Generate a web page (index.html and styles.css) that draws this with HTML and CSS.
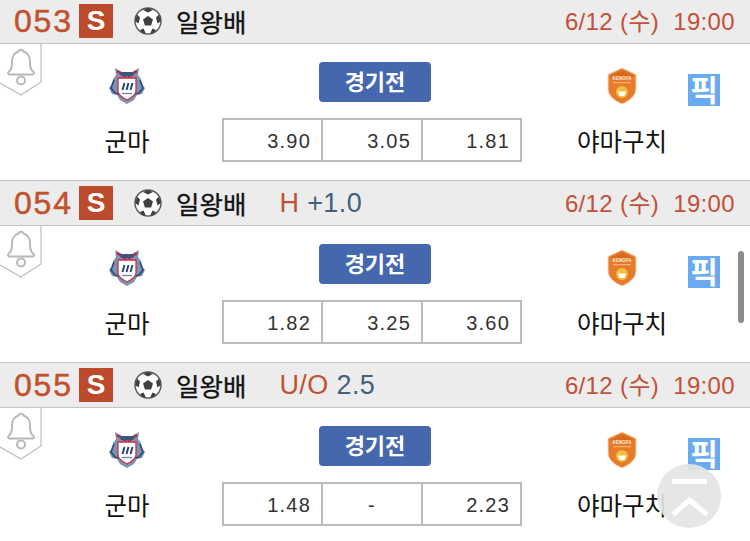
FILE: index.html
```html
<!DOCTYPE html>
<html lang="ko">
<head>
  <meta charset="UTF-8" />
  <meta name="viewport" content="width=device-width, initial-scale=1.0" />
  <title>일왕배</title>
  <link rel="stylesheet" href="styles.css">
</head>
<body>
  <svg class="defs" width="0" height="0">
    <defs>
      <symbol id="ball" viewBox="0 0 28 28">
        <circle cx="14" cy="14" r="13" fill="#fff" stroke="#555" stroke-width="1.4"/>
        <polygon points="14,9 19,12.6 17.1,18.4 10.9,18.4 9,12.6" fill="#404040"/>
        <polygon points="14,1 19,3 14,5.4 9,3" fill="#404040"/>
        <polygon points="25,7.5 27,14 23.5,16.5 22,10.5" fill="#404040"/>
        <polygon points="1,14 3,7.5 6,10.5 4.5,16.5" fill="#404040"/>
        <polygon points="6,23 9.5,21.5 12,26.7 8,25.7" fill="#404040"/>
        <polygon points="22,23 18.5,21.5 16,26.7 20,25.7" fill="#404040"/>
      </symbol>
      <symbol id="bell" viewBox="0 0 42 53">
        <path d="M41 0V38L21 51L0 39" fill="#fff" stroke="#bdbdbd" stroke-width="1.2"/>
        <path d="M8.500 28C12.500 25 12 21 12 17C12 12 15 8.500 18.500 7.500C19 5 23 5 23.500 7.500C27 8.500 30 12 30 17C30 21 29.500 25 33.500 28C34.500 29.500 33.500 30.500 32 30.500H10C8.500 30.500 7.500 29.500 8.500 28Z" fill="none" stroke="#b8b8b8" stroke-width="2"/>
        <circle cx="21" cy="36.500" r="4" fill="#fff" stroke="#b8b8b8" stroke-width="2"/>
      </symbol>
      <symbol id="gunma" viewBox="0 0 38 38">
        <path d="M7 1L14 5H24L31 1L30 8L33 12L33 17L37 21L34 27L29 28L26 33L19 37L12 33L9 28L4 27L1 21L5 17L5 12L8 8Z" fill="#7d93b4"/>
        <path d="M6 13L3 21L7 26L11 27M32 13L35 21L31 26L27 27" fill="none" stroke="#2f4d7c" stroke-width="1.800"/>
        <path d="M9 4L18 10M29 4L20 10" stroke="#c42c3a" stroke-width="2.600"/>
        <path d="M12 5H26L25 9H13Z" fill="#3b5580"/>
        <path d="M10 11H28V24C28 28 23 31 19 33C15 31 10 28 10 24Z" fill="#fff" stroke="#c8323f" stroke-width="1.300"/>
        <path d="M14.500 23L16.500 16M18.500 23L20.500 16M22.500 23L24.500 16" stroke="#23406e" stroke-width="1.900"/>
        <path d="M14 26.500H24" stroke="#6f84a5" stroke-width="1.300"/>
      </symbol>
      <symbol id="kenofa" viewBox="0 0 32 38">
        <path d="M16 1L30 7.500V22C30 29 23 34 16 37C9 34 2 29 2 22V7.500Z" fill="#e67c2b" stroke="#f8d3b0" stroke-width="1"/>
        <path d="M16 3.500L27 8.500V10H5V8.500Z" fill="#d66a1d"/>
        <text x="16" y="13.200" text-anchor="middle" font-size="4.600" font-weight="bold" fill="#fde9d6">KENOFA</text>
        <rect x="7" y="15" width="18" height="1.200" fill="#f3b27a"/>
        <circle cx="16" cy="25" r="6" fill="#f0bf3c"/>
        <path d="M12 24.500H20L18.500 29H13.500Z" fill="#fff"/>
      </symbol>
    </defs>
  </svg>

  <div class="game-list">
    <section class="game">
      <header class="game-head">
        <span class="game-no">053</span>
        <span class="grade">S</span>
        <svg class="ball"><use href="#ball"/></svg>
        <span class="league">일왕배</span>
        <span class="kickoff">6/12 (수)&nbsp; 19:00</span>
      </header>
      <div class="game-body">
        <svg class="bell"><use href="#bell"/></svg>
        <div class="team team-home">
          <svg class="logo"><use href="#gunma"/></svg>
          <span class="team-name">군마</span>
        </div>
        <div class="middle">
          <a class="status">경기전</a>
          <div class="odds">
            <span>3.90</span>
            <span>3.05</span>
            <span>1.81</span>
          </div>
        </div>
        <div class="team team-away">
          <svg class="logo"><use href="#kenofa"/></svg>
          <span class="team-name">야마구치</span>
        </div>
        <span class="pick">픽</span>
      </div>
    </section>

    <section class="game">
      <header class="game-head">
        <span class="game-no">054</span>
        <span class="grade">S</span>
        <svg class="ball"><use href="#ball"/></svg>
        <span class="league">일왕배</span>
        <span class="handicap"><em>H</em> +1.0</span>
        <span class="kickoff">6/12 (수)&nbsp; 19:00</span>
      </header>
      <div class="game-body">
        <svg class="bell"><use href="#bell"/></svg>
        <div class="team team-home">
          <svg class="logo"><use href="#gunma"/></svg>
          <span class="team-name">군마</span>
        </div>
        <div class="middle">
          <a class="status">경기전</a>
          <div class="odds">
            <span>1.82</span>
            <span>3.25</span>
            <span>3.60</span>
          </div>
        </div>
        <div class="team team-away">
          <svg class="logo"><use href="#kenofa"/></svg>
          <span class="team-name">야마구치</span>
        </div>
        <span class="pick">픽</span>
      </div>
    </section>

    <section class="game">
      <header class="game-head">
        <span class="game-no">055</span>
        <span class="grade">S</span>
        <svg class="ball"><use href="#ball"/></svg>
        <span class="league">일왕배</span>
        <span class="handicap"><em>U/O</em> 2.5</span>
        <span class="kickoff">6/12 (수)&nbsp; 19:00</span>
      </header>
      <div class="game-body">
        <svg class="bell"><use href="#bell"/></svg>
        <div class="team team-home">
          <svg class="logo"><use href="#gunma"/></svg>
          <span class="team-name">군마</span>
        </div>
        <div class="middle">
          <a class="status">경기전</a>
          <div class="odds">
            <span>1.48</span>
            <span class="draw">-</span>
            <span>2.23</span>
          </div>
        </div>
        <div class="team team-away">
          <svg class="logo"><use href="#kenofa"/></svg>
          <span class="team-name">야마구치</span>
        </div>
        <span class="pick">픽</span>
      </div>
    </section>
  </div>

  <div class="scrollbar"></div>
  <a class="to-top">
    <svg width="64" height="64" viewBox="0 0 64 64">
      <path d="M15 17.500H50M16 50.500L32.500 36L50 50.500" fill="none" stroke="#fff" stroke-width="5"/>
    </svg>
  </a>
</body>
</html>
```

FILE: styles.css
```css
html, body {
  height: 100%;
  overflow: hidden;
}

body {
  margin: 0;
  position: relative;
  background: #fff;
  color: #111;
  font-family: "Liberation Sans", "Noto Sans CJK KR", sans-serif;
}

.defs {
  position: absolute;
}

.game-list {
  margin-top: -2px;
}

.game-head {
  display: flex;
  align-items: center;
  height: 44px;
  padding-left: 14px;
  padding-right: 15px;
  background: #ececec;
  border-top: 1px solid #c4c4c4;
  border-bottom: 1px solid #c4c4c4;
}

.game-no {
  width: 65px;
  font-size: 32px;
  letter-spacing: 1.8px;
  color: #c2512f;
  -webkit-text-stroke: 0.5px #c2512f;
}

.grade {
  width: 34px;
  height: 34px;
  line-height: 34px;
  text-align: center;
  background: #bb4b2b;
  color: #fff;
  font-size: 28px;
  font-weight: bold;
}

.ball {
  width: 28px;
  height: 28px;
  margin-left: 21px;
}

.league {
  margin-left: 14px;
  margin-bottom: 2px;
  font-size: 25.5px;
  color: #111;
  -webkit-text-stroke: 0.3px #111;
}

.handicap {
  margin-left: 33px;
  font-size: 27px;
  letter-spacing: 0.4px;
  color: #43617c;
}

.handicap em {
  font-style: normal;
  color: #c2512f;
}

.kickoff {
  margin-left: auto;
  margin-bottom: 3px;
  font-size: 24px;
  letter-spacing: 0.35px;
  color: #c2513a;
}

.game-body {
  position: relative;
  display: grid;
  grid-template-columns: 222px 300px 228px;
  height: 136px;
}

.bell {
  position: absolute;
  left: 0;
  top: 0;
  width: 42px;
  height: 53px;
}

.team {
  display: flex;
  flex-direction: column;
  align-items: center;
}

.team-home {
  padding-left: 32px;
}

.team-away {
  padding-right: 28px;
}

.logo {
  width: 38px;
  height: 38px;
  margin-top: 23px;
}

.team-name {
  margin-top: 21px;
  font-size: 24.5px;
  line-height: 34px;
  color: #111;
}

.middle {
  display: flex;
  flex-direction: column;
  align-items: center;
  padding-top: 18px;
}

.status {
  width: 112px;
  height: 40px;
  margin-left: 6px;
  line-height: 41px;
  text-align: center;
  border-radius: 4px;
  background: #4567ae;
  color: #fff;
  font-size: 22px;
  font-weight: bold;
}

.odds {
  display: grid;
  grid-template-columns: 97px 100px 1fr;
  width: 300px;
  height: 44px;
  margin-top: 16px;
  box-sizing: border-box;
  border: 2px solid #bcbcbc;
}

.odds span {
  padding-right: 10px;
  text-align: right;
  font-size: 20px;
  line-height: 42px;
  letter-spacing: 1.2px;
  color: #333;
  border-left: 2px solid #bcbcbc;
}

.odds span:first-child {
  border-left: 0;
}

.odds .draw {
  padding-right: 0;
  text-align: center;
}

.pick {
  position: absolute;
  left: 688px;
  top: 30px;
  width: 32px;
  height: 32px;
  line-height: 33px;
  text-align: center;
  background: #68abf0;
  color: #fff;
  font-size: 30px;
  font-weight: bold;
}

.scrollbar {
  position: absolute;
  left: 738px;
  top: 251px;
  width: 6px;
  height: 72px;
  border-radius: 3px;
  background: #8c8c8c;
}

.to-top {
  position: absolute;
  left: 657px;
  top: 464px;
  width: 64px;
  height: 64px;
  border-radius: 50%;
  background: rgba(228, 228, 228, 0.92);
}
```
